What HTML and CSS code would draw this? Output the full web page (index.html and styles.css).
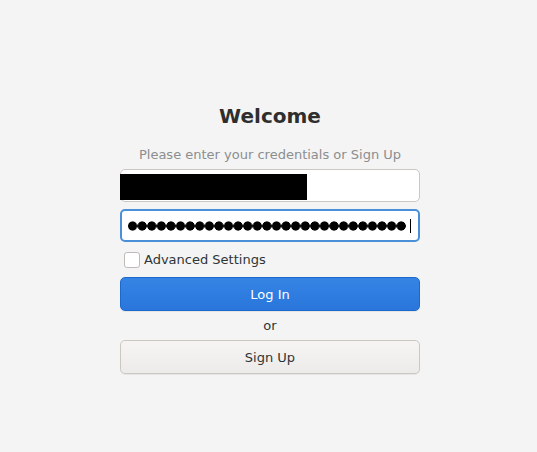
FILE: index.html
```html
<!DOCTYPE html>
<html lang="en">
<head>
    <meta charset="UTF-8">
    <meta name="viewport" content="width=device-width, initial-scale=1.0">
    <title>Welcome</title>
    <link rel="stylesheet" href="styles.css">
</head>
<body>
    <div class="login">
        <h1 class="title">Welcome</h1>
        <p class="subtitle">Please enter your credentials or Sign Up</p>

        <div class="entry">
            <span class="redacted"></span>
        </div>

        <div class="entry focused">
            <span class="dots"></span>
            <span class="caret"></span>
        </div>

        <label class="check">
            <span class="box"></span>
            Advanced Settings
        </label>

        <button class="btn primary">Log In</button>
        <p class="or">or</p>
        <button class="btn">Sign Up</button>
    </div>
</body>
</html>
```

FILE: styles.css
```css
*{
    margin: 0;
    padding: 0;
    box-sizing: border-box;

    font-family: "DejaVu Sans", sans-serif;
}

body{
    background-color: #f4f4f4;
    height: 100vh;
}

.login{
    display: flex;
    flex-direction: column;

    width: 300px;
    margin-left: 120px;
    padding-top: 104px;

    .title{
        font-size: 20px;
        line-height: 24px;
        font-weight: 700;
        color: #2e2e2e;
        text-align: center;
    }

    .subtitle{
        margin-top: 18px;
        font-size: 13px;
        line-height: 17px;
        color: #8b8e8f;
        text-align: center;
    }
}

.entry{
    display: flex;
    align-items: center;

    height: 33px;
    margin-top: 6px;
    background-color: #fff;
    border: 1px solid #cdc7c2;
    border-radius: 5px;

    .redacted{
        width: 187px;
        height: 26px;
        margin-left: -1px;
        margin-top: 2px;
        background-color: #000;
    }
}

.entry.focused{
    margin-top: 7px;
    border: 2px solid #4a90d9;
    padding: 0 7px 0 6px;

    .dots{
        flex: 1;
        height: 10px;
        margin-top: 1px;
        background: radial-gradient(circle, #000 4.3px, transparent 4.9px) repeat-x;
        background-size: 9.6px 10px;
        background-position: right center;
    }

    .caret{
        width: 1px;
        height: 14px;
        margin-left: 4px;
        background-color: #000;
    }
}

.check{
    display: flex;
    align-items: center;
    gap: 4px;

    height: 35px;
    padding-left: 4px;
    font-size: 13px;
    color: #2e3436;

    .box{
        width: 16px;
        height: 16px;
        background-color: #fff;
        border: 1px solid #c0bbb6;
        border-radius: 3px;
    }
}

.btn{
    height: 34px;
    font-size: 13px;
    color: #2e3436;
    background: linear-gradient(#f6f5f4, #edebe9);
    border: 1px solid #cdc7c2;
    border-radius: 5px;
    box-shadow: 0 1px rgba(0, 0, 0, 0.06);
    cursor: pointer;
}

.btn.primary{
    color: #fff;
    background: linear-gradient(#3584e4, #2a76dc);
    border-color: #1b6acb;
}

.or{
    height: 29px;
    line-height: 29px;
    font-size: 13px;
    color: #2e3436;
    text-align: center;
}
```
